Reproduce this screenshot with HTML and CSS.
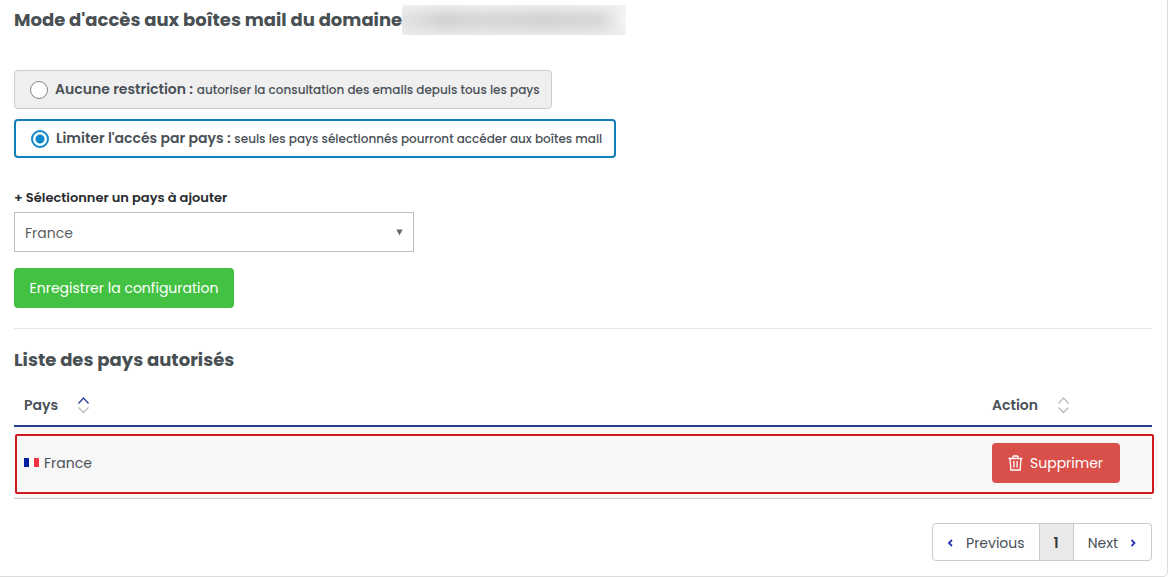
FILE: index.html
```html
<!DOCTYPE html>
<html lang="fr">
<head>
<meta charset="utf-8">
<title>Mode d'accès aux boîtes mail</title>
<link rel="stylesheet" href="styles.css">
</head>
<body>
<main class="panel">
  <h2 class="title"><span class="title-text">Mode d'accès aux boîtes mail du domaine</span><span class="masked" aria-hidden="true"></span></h2>

  <form class="config">
    <div class="options">
      <label class="option option-all"><input class="radio" type="radio" name="mode"><span class="option-text"><b class="option-name">Aucune restriction :</b> <span class="hint">autoriser la consultation des emails depuis tous les pays</span></span></label>
      <label class="option option-limit"><input class="radio" type="radio" name="mode" checked><span class="option-text"><b class="option-name">Limiter l'accés par pays :</b> <span class="hint">seuls les pays sélectionnés pourront accéder aux boîtes mail</span></span></label>
    </div>
    <label class="field-label" for="country">+ Sélectionner un pays à ajouter</label>
    <div class="select-wrap">
      <select class="select" id="country"><option>France</option></select>
      <svg class="caret" viewBox="0 0 8 8" aria-hidden="true"><path d="M0.5 0.5h7L4 7.5z"/></svg>
    </div>
    <button class="btn btn-save" type="button">Enregistrer la configuration</button>
  </form>

  <section class="list">
    <h2 class="title list-title">Liste des pays autorisés</h2>
    <div class="table-wrap">
      <table class="table">
        <thead>
          <tr>
            <th><span class="head">Pays<svg class="sort" viewBox="0 0 13 18" aria-hidden="true"><path class="on" d="M1.500 7.500 6.500 2l5 5.500"/><path d="M1.500 11.500l5 5 5-5"/></svg></span></th>
            <th class="col-action"><span class="head">Action<svg class="sort" viewBox="0 0 13 18" aria-hidden="true"><path d="M1.500 7.500l5-5.500 5 5.500"/><path d="M1.500 11.500l5 5 5-5"/></svg></span></th>
          </tr>
        </thead>
        <tbody>
          <tr>
            <td><span class="country"><svg class="flag" viewBox="0 0 15 9" aria-hidden="true"><path fill="#00209f" d="M0 0h5v9H0z"/><path fill="#fff" d="M5 0h5v9H5z"/><path fill="#ef3340" d="M10 0h5v9h-5z"/></svg>France</span></td>
            <td><button class="btn btn-delete" type="button"><svg class="trash" viewBox="0 0 16 16" aria-hidden="true"><path d="M1 3.500h14M5 3.500l1-2.500h4l1 2.500M2.500 3.500l.9 11.500h9.200l.9-11.500M6.300 6l.2 6.500M9.700 6l-.2 6.500"/></svg>Supprimer</button></td>
          </tr>
        </tbody>
      </table>
      <div class="highlight"></div>
    </div>
    <nav class="pager">
      <button class="page" type="button"><svg class="chev" viewBox="0 0 7 8" aria-hidden="true"><path d="M5 1 2 4l3 3"/></svg>Previous</button>
      <button class="page current" type="button">1</button>
      <button class="page" type="button">Next<svg class="chev" viewBox="0 0 7 8" aria-hidden="true"><path d="M1.500 1l3 3-3 3"/></svg></button>
    </nav>
  </section>
</main>
</body>
</html>
```

FILE: styles.css
```css
* { box-sizing: border-box; }

body {
  margin: 0;
  background: #fff;
  color: #495057;
  font: 14px/20px Poppins, Inter, "Open Sans", sans-serif;
}

button, select { font: inherit; color: inherit; }

.panel {
  padding: 5px 15px 15px 14px;
  border: solid #dcdcdc;
  border-width: 0 1px 1px 0;
  border-radius: 0 0 5px 0;
}

.title {
  display: flex;
  align-items: center;
  margin: 0;
  font-size: 18px;
  line-height: 30px;
  font-weight: 700;
  color: #495054;
}

.title-text { white-space: nowrap; }

.masked {
  width: 224px;
  height: 30px;
  border-radius: 3px;
  background:
    linear-gradient(#f2f2f3cc 0%, transparent 40%, transparent 60%, #ececedcc 100%),
    linear-gradient(90deg, #e4e5e6, #d2d3d5 18%, #d8d9da 35%, #d2d4d5 65%, #d8d9da 88%, #f6f6f6);
}

.options {
  display: flex;
  flex-direction: column;
  align-items: flex-start;
  gap: 10px;
  margin: 35px 0 30px;
}

.option {
  display: flex;
  align-items: center;
  gap: 7px;
  max-width: 100%;
  min-height: 39px;
  padding: 0 15px;
  border: 1px solid #ccc;
  border-radius: 4px;
  background: #efefef;
}

.option-all { width: 538px; }

.option-limit {
  width: 602px;
  border: 2px solid #117fba;
  background: #fff;
}

.option-text { white-space: nowrap; }
.option-name { font-size: 14px; font-weight: 600; }
.hint { font-size: 12px; font-weight: 500; }

.radio {
  appearance: none;
  flex: none;
  width: 18px;
  height: 18px;
  margin: 0;
  border: 1px solid #858585;
  border-radius: 50%;
  background: #fff;
}

.radio:checked {
  border: 2px solid #0f87cb;
  background: radial-gradient(circle, #0f87cb 4px, #fff 5px);
}

.field-label {
  display: block;
  margin-bottom: 4px;
  font-size: 13px;
  font-weight: 600;
  color: #282b2e;
}

.select-wrap {
  position: relative;
  max-width: 400px;
}

.select {
  appearance: none;
  display: block;
  width: 100%;
  height: 40px;
  padding: 2px 10px 0;
  border: 1px solid #bfbfbf;
  border-radius: 0;
  background: #fff;
  color: #5b5e60;
}

.caret {
  position: absolute;
  top: 17px;
  right: 11px;
  width: 7px;
  height: 7px;
  fill: #666;
}

.btn {
  display: flex;
  align-items: center;
  height: 40px;
  padding: 0 15px;
  border: 0;
  border-radius: 4px;
  color: #fff;
}

.btn-save {
  justify-content: center;
  min-width: 220px;
  margin-top: 16px;
  background: #43c143;
}

.btn-delete {
  gap: 6px;
  min-width: 128px;
  background: #d9504b;
}

.trash {
  width: 17px;
  height: 16px;
  fill: none;
  stroke: #fff;
  stroke-width: 1.3;
}

.list {
  margin-top: 20px;
  padding-top: 16px;
  border-top: 1px solid #e8e8e8;
}

.table-wrap { position: relative; margin: 10px 0 24px; }

.table {
  width: 100%;
  border-collapse: separate;
  border-spacing: 0;
}

.table th {
  height: 42px;
  padding: 0 10px;
  border-bottom: 2px solid #24408e;
  font-weight: 600;
  text-align: left;
}

.col-action { width: 170px; }

.table td {
  height: 72px;
  padding: 0 10px;
  border-bottom: 1px solid #ccc;
  background: #f7f7f7;
}

.head { display: flex; align-items: center; gap: 19px; }

.sort {
  width: 13px;
  height: 18px;
  fill: none;
  stroke: #bbb;
  stroke-width: 1.3;
}

.sort .on { stroke: #2b3f9e; }

.country { display: flex; align-items: center; gap: 5px; }
.flag { width: 15px; height: 9px; }

.highlight {
  position: absolute;
  inset: 49px -2px 5px 1px;
  border: 2px solid #d21a1d;
  border-radius: 2px;
  pointer-events: none;
}

.pager { display: flex; justify-content: flex-end; }

.page {
  display: flex;
  align-items: center;
  gap: 12px;
  height: 38px;
  padding: 1px 14px 0;
  border: 1px solid #ccc;
  background: #fff;
}

.page + .page { border-left: 0; }
.page:first-child { border-radius: 4px 0 0 4px; }
.page:last-child { border-radius: 0 4px 4px 0; }
.current { background: #e9e9e9; font-weight: 600; color: #333; }

.chev {
  width: 7px;
  height: 8px;
  fill: none;
  stroke: #2c35b8;
  stroke-width: 1.8;
}
```
